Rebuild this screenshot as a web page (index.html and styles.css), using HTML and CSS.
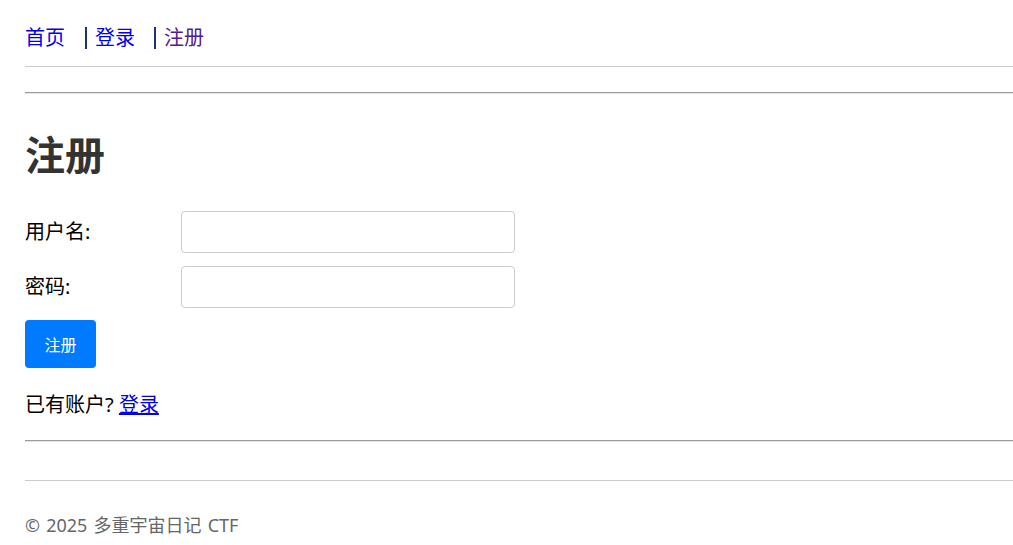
FILE: index.html
```html
<!DOCTYPE html>
<html lang="zh-CN">
<head>
<meta charset="utf-8">
<title>注册 - 多重宇宙日记 CTF</title>
<link rel="stylesheet" href="styles.css">
</head>
<body>
<div class="page">
  <header class="site-header">
    <nav class="nav">
      <a class="nav-link" href="#">首页</a>
      <a class="nav-link sep" href="#">登录</a>
      <a class="nav-link sep visited" href="#">注册</a>
    </nav>
  </header>
  <hr class="rule">
  <main class="main">
    <h1 class="title">注册</h1>
    <form class="form">
      <div class="row">
        <label class="label" for="u">用户名:</label>
        <input class="input" id="u" type="text">
      </div>
      <div class="row row-last">
        <label class="label" for="p">密码:</label>
        <input class="input" id="p" type="password">
      </div>
      <button class="btn" type="button">注册</button>
    </form>
    <p class="alt">已有账户? <a class="alt-link" href="#">登录</a></p>
  </main>
  <hr class="rule rule-bottom">
  <footer class="footer">
    <p class="copy">© 2025 多重宇宙日记 CTF</p>
  </footer>
</div>
</body>
</html>
```

FILE: styles.css
```css
html, body {
  margin: 0;
  padding: 0;
  background: #fff;
}
body {
  font-family: "Noto Sans", "Noto Sans CJK SC", sans-serif;
  font-size: 20px;
  color: #000;
}
.page {
  padding-left: 25px;
}
.site-header {
  padding: 25px 0 15px;
  border-bottom: 1px solid #ccc;
}
.nav {
  display: flex;
  align-items: center;
  height: 26px;
  font-size: 20px;
  line-height: 26px;
}
.nav-link {
  color: #0000ee;
  text-decoration: none;
}
.nav-link.visited {
  color: #551a8b;
}
.nav-link.sep {
  margin-left: 20px;
  padding-left: 8px;
  border-left: 2px solid #1c3474;
  line-height: 22px;
}
.nav-link.sep.visited {
  margin-left: 19px;
}
.rule {
  margin: 25px 0 0;
  border: 0;
  height: 0;
  border-top: 1px solid #9a9a9a;
  border-bottom: 1px solid #e6e6e6;
}
.main {
  padding-top: 37px;
}
.title {
  margin: 0;
  font-size: 40px;
  line-height: 48px;
  font-weight: 700;
  color: #333;
}
.form {
  margin-top: 32px;
  display: flex;
  flex-direction: column;
  align-items: flex-start;
}
.row {
  display: flex;
  align-items: center;
  margin-bottom: 13px;
}
.row-last {
  margin-bottom: 12px;
}
.label {
  width: 156px;
  line-height: 30px;
}
.input {
  box-sizing: border-box;
  width: 334px;
  height: 42px;
  margin: 0;
  border: 1px solid #ccc;
  border-radius: 4px;
  padding: 0 10px;
  font: inherit;
}
.btn {
  box-sizing: border-box;
  width: 71px;
  height: 48px;
  margin: 0;
  border: 0;
  border-radius: 4px;
  background: #007bff;
  color: #fff;
  font-family: inherit;
  font-size: 16px;
  padding: 0;
}
.alt {
  margin: 22px 0 0;
  line-height: 30px;
}
.alt-link {
  color: #0000ee;
}
.rule-bottom {
  margin-top: 20px;
}
.footer {
  margin-top: 38px;
  border-top: 1px solid #ccc;
  padding-top: 31px;
}
.copy {
  margin: 0;
  font-size: 18px;
  line-height: 27px;
  word-spacing: 1.5px;
  color: #666;
}
```
